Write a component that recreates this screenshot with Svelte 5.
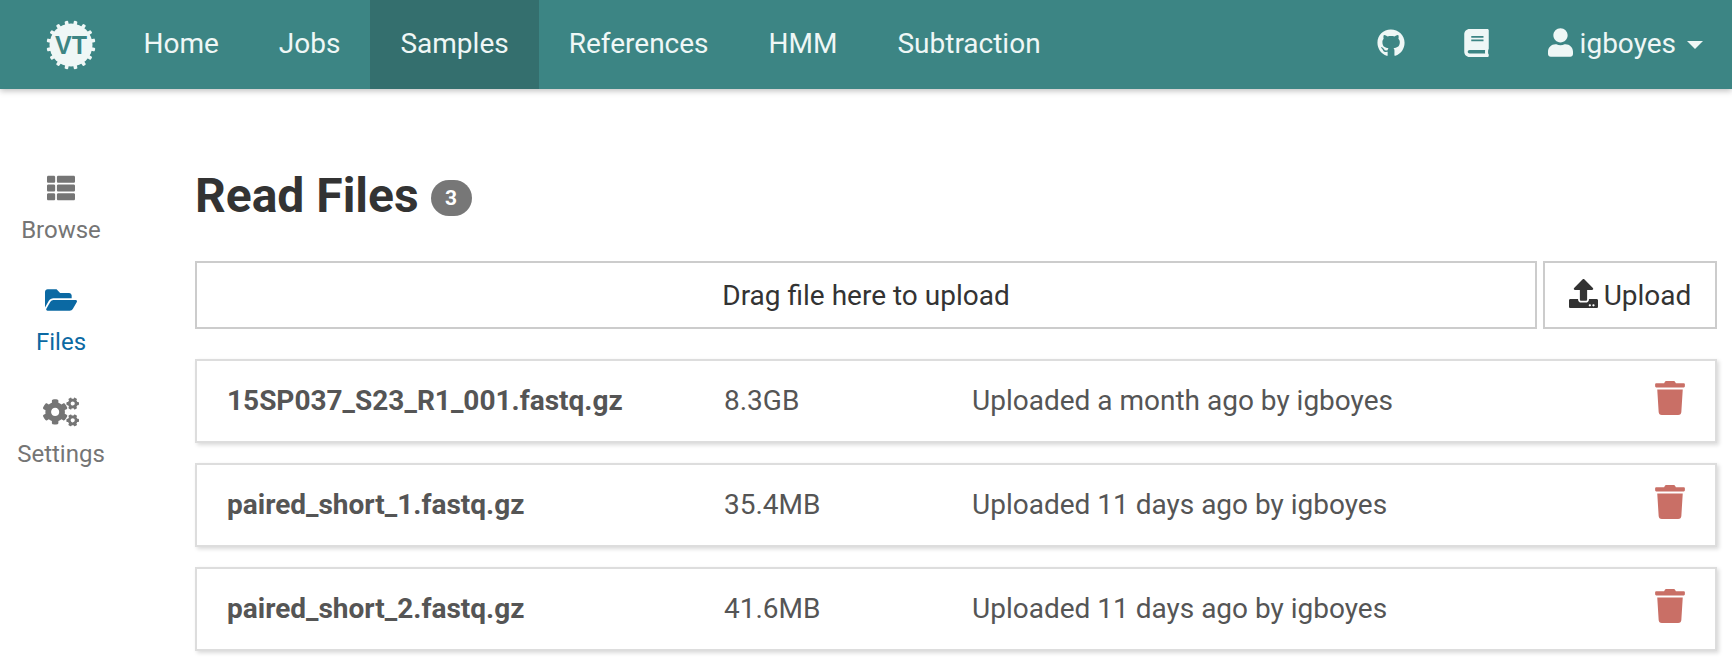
<script>
  const I = {
    github: ['0 0 496 512','M165.9 397.4c0 2-2.3 3.6-5.2 3.6-3.3 0-5.6-1.6-5.6-3.6 0-2 2.3-3.6 5.2-3.6 3-.3 5.6 1.3 5.6 3.6zm-31.1-4.5c-.7 2 1.3 4.3 4.3 4.9 2.6 1 5.6 0 6.2-2s-1.3-4.3-4.3-5.2c-2.6-.7-5.5.3-6.2 2.3zm44.2-1.7c-2.9.7-4.9 2.6-4.6 4.9.3 2 2.9 3.3 5.9 2.6 2.9-.7 4.9-2.6 4.6-4.6-.3-1.9-3-3.2-5.9-2.9zM244.8 8C106.1 8 0 113.3 0 252c0 110.9 69.8 205.8 169.5 239.2 12.8 2.3 17.3-5.6 17.3-12.1 0-6.2-.3-40.4-.3-61.4 0 0-70 15-84.7-29.8 0 0-11.4-29.1-27.8-36.6 0 0-22.9-15.7 1.6-15.4 0 0 24.9 2 38.6 25.8 21.9 38.6 58.6 27.5 72.9 20.9 2.3-16 8.8-27.1 16-33.7-55.9-6.2-112.3-14.3-112.3-110.5 0-27.5 7.6-41.3 23.6-58.9-2.6-6.5-11.1-33.3 2.6-67.9 20.9-6.5 69 27 69 27 20-5.6 41.5-8.5 62.8-8.5s42.8 2.9 62.8 8.5c0 0 48.1-33.6 69-27 13.7 34.7 5.2 61.4 2.6 67.9 16 17.7 25.8 31.5 25.8 58.9 0 96.5-58.9 104.2-114.8 110.5 9.2 7.9 17 22.9 17 46.4 0 33.7-.3 75.4-.3 83.6 0 6.5 4.6 14.4 17.3 12.1C428.2 457.8 496 362.9 496 252 496 113.3 383.5 8 244.8 8z'],
    book: ['0 0 448 512','M448 360V24c0-13.3-10.7-24-24-24H96C43 0 0 43 0 96v320c0 53 43 96 96 96h328c13.3 0 24-10.7 24-24v-16c0-7.5-3.5-14.3-8.9-18.7-4.2-15.4-4.2-59.3 0-74.7 5.4-4.3 8.9-11.1 8.9-18.6zM128 134c0-3.3 2.7-6 6-6h212c3.3 0 6 2.7 6 6v20c0 3.3-2.7 6-6 6H134c-3.3 0-6-2.7-6-6v-20zm0 64c0-3.3 2.7-6 6-6h212c3.3 0 6 2.7 6 6v20c0 3.3-2.7 6-6 6H134c-3.3 0-6-2.7-6-6v-20zm253.4 250H96c-17.7 0-32-14.3-32-32 0-17.6 14.4-32 32-32h285.4c-1.9 17.1-1.9 46.9 0 64z'],
    user: ['0 0 448 512','M224 256c70.7 0 128-57.3 128-128S294.7 0 224 0 96 57.3 96 128s57.3 128 128 128zm89.6 32h-16.7c-22.2 10.2-46.9 16-72.9 16s-50.6-5.8-72.9-16h-16.7C60.2 288 0 348.2 0 422.4V464c0 26.5 21.5 48 48 48h352c26.5 0 48-21.5 48-48v-41.6c0-74.2-60.2-134.4-134.4-134.4z'],
    list: ['0 0 512 512','M149.333 216v80c0 13.255-10.745 24-24 24H24c-13.255 0-24-10.745-24-24v-80c0-13.255 10.745-24 24-24h101.333c13.255 0 24 10.745 24 24zM0 376v80c0 13.255 10.745 24 24 24h101.333c13.255 0 24-10.745 24-24v-80c0-13.255-10.745-24-24-24H24c-13.255 0-24 10.745-24 24zM125.333 32H24C10.745 32 0 42.745 0 56v80c0 13.255 10.745 24 24 24h101.333c13.255 0 24-10.745 24-24V56c0-13.255-10.745-24-24-24zm80 448H488c13.255 0 24-10.745 24-24v-80c0-13.255-10.745-24-24-24H205.333c-13.255 0-24 10.745-24 24v80c0 13.255 10.745 24 24 24zm-24-424v80c0 13.255 10.745 24 24 24H488c13.255 0 24-10.745 24-24V56c0-13.255-10.745-24-24-24H205.333c-13.255 0-24 10.745-24 24zm24 264H488c13.255 0 24-10.745 24-24v-80c0-13.255-10.745-24-24-24H205.333c-13.255 0-24 10.745-24 24v80c0 13.255 10.745 24 24 24z'],
    folder: ['0 0 576 512','M572.694 292.093L500.27 416.248A63.997 63.997 0 0 1 444.989 448H45.025c-18.523 0-30.064-20.093-20.731-36.093l72.424-124.155A64 64 0 0 1 152 256h399.964c18.523 0 30.064 20.093 20.73 36.093zM152 224h328v-48c0-26.51-21.49-48-48-48H272l-64-64H48C21.49 64 0 85.49 0 112v278.046l69.077-118.418C86.214 242.25 117.989 224 152 224z'],
    cogs: ['0 0 640 512','M512.1 191l-8.2 14.3c-3 5.3-9.4 7.5-15.1 5.4-11.8-4.4-22.6-10.7-32.1-18.6-4.6-3.8-5.8-10.5-2.8-15.7l8.2-14.3c-6.9-8-12.3-17.3-15.9-27.4h-16.5c-6 0-11.2-4.3-12.2-10.3-2-12-2.1-24.6 0-37.1 1-6 6.2-10.4 12.2-10.4h16.5c3.6-10.1 9-19.4 15.9-27.4l-8.2-14.3c-3-5.2-1.9-11.9 2.8-15.7 9.5-7.9 20.4-14.2 32.1-18.6 5.7-2.1 12.1.1 15.1 5.4l8.2 14.3c10.5-1.9 21.2-1.9 31.7 0L552 6.3c3-5.3 9.4-7.5 15.1-5.4 11.8 4.4 22.6 10.7 32.1 18.6 4.6 3.8 5.8 10.5 2.8 15.7l-8.2 14.3c6.9 8 12.3 17.3 15.9 27.4h16.5c6 0 11.2 4.3 12.2 10.3 2 12 2.1 24.6 0 37.1-1 6-6.2 10.4-12.2 10.4h-16.5c-3.6 10.1-9 19.4-15.9 27.4l8.2 14.3c3 5.2 1.9 11.9-2.8 15.7-9.5 7.9-20.4 14.2-32.1 18.6-5.7 2.1-12.1-.1-15.1-5.4l-8.2-14.3c-10.4 1.9-21.2 1.9-31.7 0zm-10.5-58.8c38.5 29.6 82.4-14.3 52.8-52.8-38.5-29.7-82.4 14.3-52.8 52.8zM386.3 286.1l33.7 16.8c10.1 5.8 14.5 18.1 10.5 29.1-8.9 24.2-26.4 46.4-42.6 65.8-7.4 8.9-20.2 11.1-30.3 5.3l-29.1-16.8c-16 13.7-34.6 24.6-54.9 31.7v33.6c0 11.6-8.3 21.6-19.7 23.6-24.6 4.2-50.4 4.4-75.9 0-11.5-2-20-11.9-20-23.6V418c-20.3-7.2-38.9-18-54.9-31.7L74 403c-10 5.8-22.9 3.6-30.3-5.3-16.2-19.4-33.3-41.6-42.2-65.7-4-10.9.4-23.2 10.5-29.1l33.3-16.8c-3.9-20.9-3.9-42.4 0-63.4L12 205.8c-10.1-5.8-14.6-18.1-10.5-29 8.9-24.2 26-46.4 42.2-65.8 7.4-8.9 20.2-11.1 30.3-5.3l29.1 16.8c16-13.7 34.6-24.6 54.9-31.7V57.1c0-11.5 8.2-21.5 19.6-23.5 24.6-4.2 50.5-4.4 76-.1 11.5 2 20 11.9 20 23.6v33.6c20.3 7.2 38.9 18 54.9 31.7l29.1-16.8c10-5.8 22.9-3.6 30.3 5.3 16.2 19.4 33.2 41.6 42.1 65.8 4 10.9.1 23.2-10 29.1l-33.7 16.8c3.9 21 3.9 42.5 0 63.5zm-117.6 21.1c59.2-77-28.7-164.9-105.7-105.7-59.2 77 28.7 164.9 105.7 105.7zm243.4 182.7l-8.2 14.3c-3 5.3-9.4 7.5-15.1 5.4-11.8-4.4-22.6-10.7-32.1-18.6-4.6-3.8-5.8-10.5-2.8-15.7l8.2-14.3c-6.9-8-12.3-17.3-15.9-27.4h-16.5c-6 0-11.2-4.3-12.2-10.3-2-12-2.1-24.6 0-37.1 1-6 6.2-10.4 12.2-10.4h16.5c3.6-10.1 9-19.4 15.9-27.4l-8.2-14.3c-3-5.2-1.9-11.9 2.8-15.7 9.5-7.9 20.4-14.2 32.1-18.6 5.7-2.1 12.1.1 15.1 5.4l8.2 14.3c10.5-1.9 21.2-1.9 31.7 0l8.2-14.3c3-5.3 9.4-7.5 15.1-5.4 11.8 4.4 22.6 10.7 32.1 18.6 4.6 3.8 5.8 10.5 2.8 15.7l-8.2 14.3c6.9 8 12.3 17.3 15.9 27.4h16.5c6 0 11.2 4.3 12.2 10.3 2 12 2.1 24.6 0 37.1-1 6-6.2 10.4-12.2 10.4h-16.5c-3.6 10.1-9 19.4-15.9 27.4l8.2 14.3c3 5.2 1.9 11.9-2.8 15.7-9.5 7.9-20.4 14.2-32.1 18.6-5.7 2.1-12.1-.1-15.1-5.4l-8.2-14.3c-10.4 1.9-21.2 1.9-31.7 0zM501.6 431c38.5 29.6 82.4-14.3 52.8-52.8-38.5-29.6-82.4 14.3-52.8 52.8z'],
    trash: ['0 0 448 512','M432 32H312l-9.4-18.7A24 24 0 0 0 281.1 0H166.8a23.72 23.72 0 0 0-21.4 13.3L136 32H16A16 16 0 0 0 0 48v32a16 16 0 0 0 16 16h416a16 16 0 0 0 16-16V48a16 16 0 0 0-16-16zM53.2 467a48 48 0 0 0 47.9 45h245.8a48 48 0 0 0 47.9-45L416 128H32z'],
    upload: ['0 0 512 512','M296 384h-80c-13.3 0-24-10.7-24-24V192h-87.7c-17.8 0-26.7-21.5-14.1-34.1L242.3 5.7c7.5-7.5 19.8-7.5 27.3 0l152.2 152.2c12.6 12.6 3.7 34.1-14.1 34.1H320v168c0 13.3-10.7 24-24 24zm216-8v112c0 13.3-10.7 24-24 24H24c-13.3 0-24-10.7-24-24V376c0-13.3 10.7-24 24-24h136v8c0 30.9 25.1 56 56 56h80c30.9 0 56-25.1 56-56v-8h136c13.3 0 24 10.7 24 24zm-124 88c0-11-9-20-20-20s-20 9-20 20 9 20 20 20 20-9 20-20zm64 0c0-11-9-20-20-20s-20 9-20 20 9 20 20 20 20-9 20-20z']
  };
  const links = ['Home','Jobs','Samples','References','HMM','Subtraction'];
  const files = [
    { name:'15SP037_S23_R1_001.fastq.gz', size:'8.3GB', when:'a month ago' },
    { name:'paired_short_1.fastq.gz', size:'35.4MB', when:'11 days ago' },
    { name:'paired_short_2.fastq.gz', size:'41.6MB', when:'11 days ago' }
  ];
  const teeth = Array.from({length:16},(_,i)=>i*22.5);
</script>

{#snippet icon(name, cls)}
  <svg class={cls} viewBox={I[name][0]} aria-hidden="true"><path fill="currentColor" d={I[name][1]}/></svg>
{/snippet}

<header class="nav">
  <div class="brand">
    <svg class="logo" viewBox="0 0 50 50" aria-hidden="true">
      <circle cx="25" cy="25" r="21.5" fill="#eff7f6"/>
      {#each teeth as a}
        <rect x="23.2" y="0.5" width="3.6" height="5" rx="1" fill="#eff7f6" transform="rotate({a + 11.25} 25 25)"/>
      {/each}
      <text x="25" y="34" text-anchor="middle" class="vt">VT</text>
    </svg>
  </div>
  <nav class="links">
    {#each links as l}
      <span class="link" class:active={l==='Samples'}>{l}</span>
    {/each}
  </nav>
  <div class="right">
    <span class="ico-gh">{@render icon('github','gh')}</span>
    <span class="ico-book">{@render icon('book','bk')}</span>
    <span class="usr">{@render icon('user','us')}<span>igboyes</span><i class="caret"></i></span>
  </div>
</header>

<div class="page">
  <aside class="side">
    <div class="si">{@render icon('list','s-list')}<span>Browse</span></div>
    <div class="si on">{@render icon('folder','s-folder')}<span>Files</span></div>
    <div class="si">{@render icon('cogs','s-cogs')}<span>Settings</span></div>
  </aside>
  <main class="main">
    <h1>Read Files <span class="badge">3</span></h1>
    <div class="up">
      <div class="drop">Drag file here to upload</div>
      <div class="btn">{@render icon('upload','u-ic')}<span>Upload</span></div>
    </div>
    {#each files as f}
      <div class="row">
        <strong class="name">{f.name}</strong>
        <span class="size">{f.size}</span>
        <span class="when">Uploaded {f.when} by igboyes</span>
        {@render icon('trash','del')}
      </div>
    {/each}
  </main>
</div>

<style>
  :global(body){margin:0;background:#fff;font-family:Roboto,sans-serif;color:#333;}
  svg{display:block;}
  .nav{height:89px;background:#3c8584;box-shadow:0 2px 6px rgba(0,0,0,.25);display:flex;align-items:stretch;color:#eff7f6;position:relative;}
  .brand{width:144px;display:flex;align-items:center;padding-left:46px;box-sizing:border-box;}
  .logo{width:50px;height:50px;}
  .vt{font:800 25px "Liberation Sans",sans-serif;fill:#3c8584;}
  .links{display:flex;margin-left:-30.5px;}
  .link{padding:0 30px;font-size:28px;line-height:88px;height:89px;}
  .link.active{background:#346f6e;}
  .right{margin-left:auto;display:flex;align-items:center;padding-right:29px;}
  .gh{width:28px;height:28px;}
  .bk{width:25px;height:28px;}
  .us{width:25px;height:29px;margin-right:7px;margin-top:-3px;}
  .ico-gh{margin-right:59px;margin-top:-3px;}
  .ico-book{margin-right:59px;margin-top:-3px;}
  .usr{display:flex;align-items:center;font-size:28px;margin-top:-2px;}
  .caret{width:0;height:0;border:8px solid transparent;border-top-color:#eff7f6;border-bottom:0;margin-left:11px;margin-top:2px;}

  .page{display:flex;}
  .side{width:122px;padding-top:84px;display:flex;flex-direction:column;gap:38px;flex:none;}
  .si{display:flex;flex-direction:column;align-items:center;color:#757575;font-size:24px;line-height:33px;gap:11px;}
  .si.on{color:#0b69a3;}
  .s-list{width:28px;height:30px;}
  .s-folder{width:32px;height:30px;}
  .s-cogs{width:36px;height:30px;}
  .main{margin-left:73px;width:1522px;}
  h1{margin:0;padding-top:77px;font-size:48px;line-height:60px;font-weight:700;display:flex;white-space:pre;height:95px;align-items:flex-start;}
  .badge{background:#777;color:#fff;font-size:21px;font-weight:700;line-height:36px;height:36px;width:41px;text-align:center;border-radius:18px;margin-top:14px;}
  .up{display:flex;gap:6px;margin-bottom:30px;}
  .drop{flex:1;height:68px;border:2px solid #ccc;box-sizing:border-box;display:flex;align-items:center;justify-content:center;font-size:28px;color:#333;}
  .btn{width:174px;height:68px;border:2px solid #ccc;box-sizing:border-box;display:flex;align-items:center;justify-content:center;font-size:28px;gap:6px;}
  .u-ic{width:29px;height:29px;margin-top:-4px;}
  .row{height:84px;border:2px solid #ddd;box-sizing:border-box;box-shadow:2px 2px 4px rgba(0,0,0,.15);display:flex;align-items:center;margin-bottom:20px;padding:0 30px 2px 30px;font-size:28px;color:#555;}
  .name{width:497px;flex:none;}
  .size{width:248px;flex:none;}
  .when{flex:1;}
  .del{width:30px;height:34px;color:#c96f66;margin-top:-5px;}
</style>
